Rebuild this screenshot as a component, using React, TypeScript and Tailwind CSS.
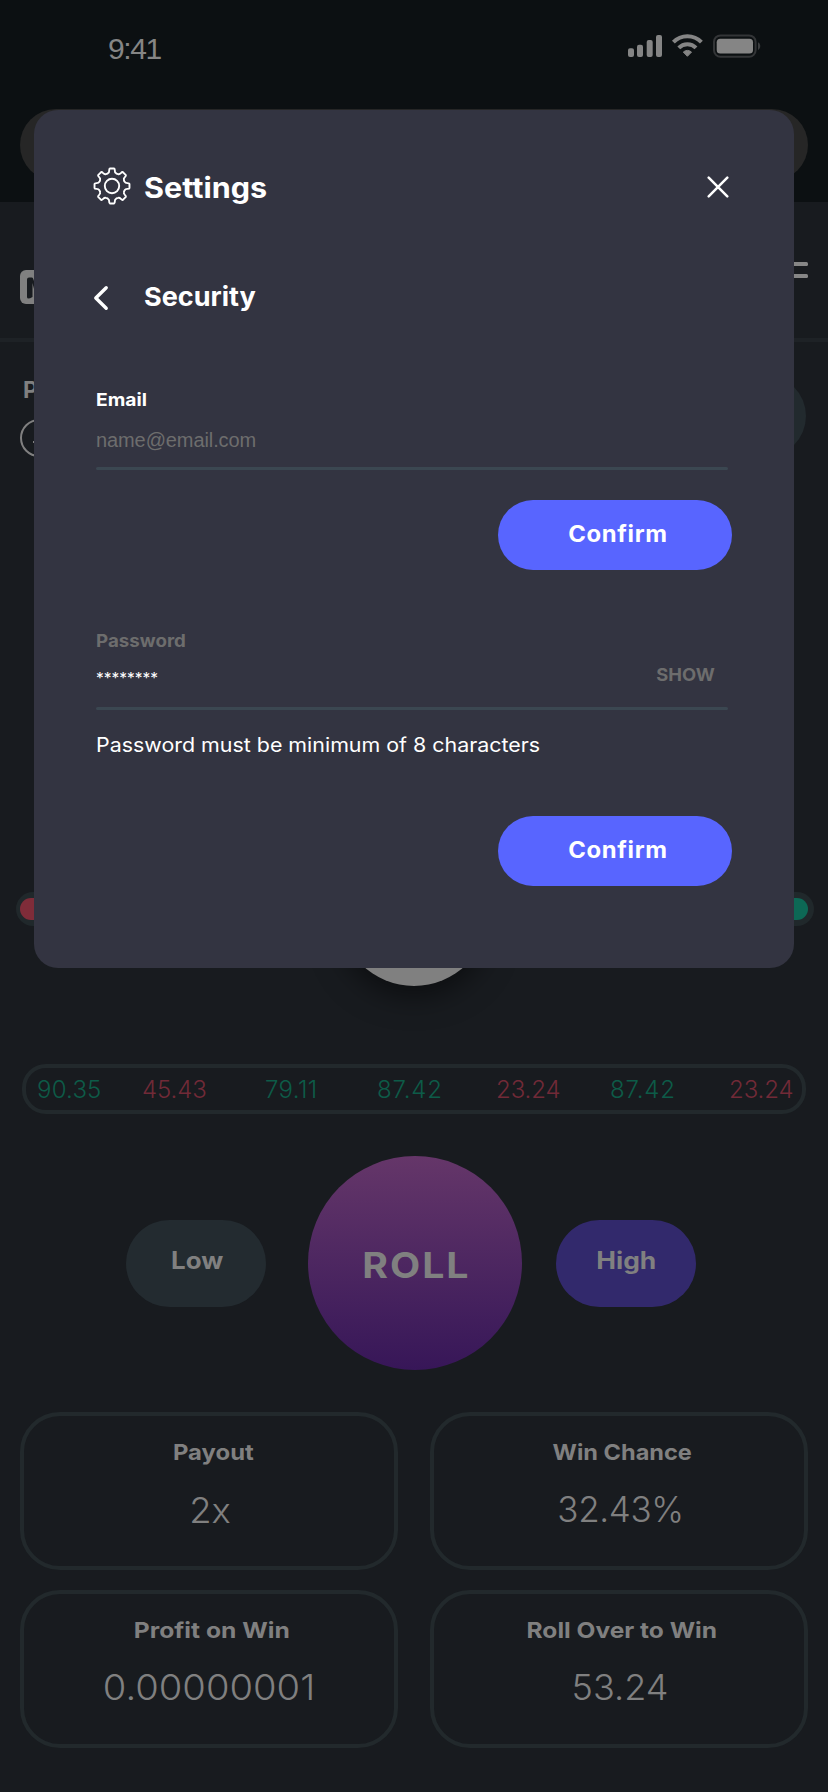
import React from 'react';

const results = [
  { v: '90.35', c: 'text-[#0d5b48]', p: 'w-[105px] tracking-[0.2px]' },
  { v: '45.43', c: 'text-[#712a37]', p: 'w-[123px] tracking-[-0.1px]' },
  { v: '79.11', c: 'text-[#0d5b48]', p: 'w-[112px] tracking-[0.4px]' },
  { v: '87.42', c: 'text-[#0d5b48]', p: 'w-[119px] tracking-[0.8px]' },
  { v: '23.24', c: 'text-[#712a37]', p: 'w-[114px] tracking-[-0.1px]' },
  { v: '87.42', c: 'text-[#0d5b48]', p: 'w-[119px] tracking-[0.8px]' },
  { v: '23.24', c: 'text-[#712a37]', p: 'w-[66px] tracking-[-0.1px]' },
];

const stats = [
  { label: 'Payout', value: '2x', lc: 'pl-[8px] scale-x-[1.085]', vc: 'mt-[35px] pl-[2px] scale-x-[1.04]' },
  { label: 'Win Chance', value: '32.43%', lc: 'pl-[6px] scale-x-[1.07]', vc: 'mt-[34px] pl-[3px] tracking-[-0.36px]' },
  { label: 'Profit on Win', value: '0.00000001', lc: 'pl-[5px] scale-x-[1.12]', vc: 'mt-[34px] scale-x-[1.09]' },
  { label: 'Roll Over to Win', value: '53.24', lc: 'pl-[5px] scale-x-[1.115]', vc: 'mt-[34px] pl-[2px] scale-x-[1.03]' },
];

function gearPath() {
  const at = (r: number, deg: number) => {
    const a = ((deg - 90) * Math.PI) / 180;
    return `${(19 + r * Math.cos(a)).toFixed(2)} ${(19 + r * Math.sin(a)).toFixed(2)}`;
  };
  let d = '';
  for (let i = 0; i < 8; i++) {
    const b = i * 45;
    d += `${i === 0 ? 'M' : 'L'}${at(15.6, b - 10.5)} Q${at(17.6, b - 9.5)} ${at(17.6, b - 7)} L${at(17.6, b + 7)} Q${at(17.6, b + 9.5)} ${at(15.6, b + 10.5)} Q${at(13.6, b + 12)} ${at(13.4, b + 17.5)} Q${at(13, b + 22.5)} ${at(13.4, b + 27.5)} Q${at(13.6, b + 33)} ${at(15.6, b + 34.5)} `;
  }
  return d + 'Z';
}

function StatusIcons() {
  return (
    <svg width="136" height="26" viewBox="0 0 136 26" fill="#858585">
      <rect x="1" y="15.3" width="6" height="8.7" rx="2" />
      <rect x="10" y="11.7" width="6" height="12.3" rx="2" />
      <rect x="19.7" y="7" width="6" height="17" rx="2" />
      <rect x="29" y="2" width="6" height="22" rx="2" />
      <g fill="none" stroke="#858585" strokeWidth="4">
        <path d="M46.4 9.2a19.5 19.5 0 0 1 28 0" />
        <path d="M51.8 14.9a12 12 0 0 1 17.2 0" />
      </g>
      <path d="M60.4 23.3l-4.1-4.2a5.8 5.8 0 0 1 8.2 0z" strokeLinejoin="round" stroke="#858585" strokeWidth="1" />
      <rect x="87" y="2.4" width="41.6" height="21.4" rx="6.5" fill="none" stroke="#333537" strokeWidth="2" />
      <rect x="89.7" y="5.7" width="36.3" height="14.8" rx="3.5" />
      <path d="M131 9.3v7.6c3-1.3 3-6.3 0-7.6z" fill="#3c3e40" />
    </svg>
  );
}

function ConfirmButton() {
  return (
    <button className="h-[70px] w-[234px] shrink-0 self-end rounded-full bg-[#5865ff] pb-[2px] pl-[5px] text-[22.5px] font-bold leading-[68px] text-white">
      <span className="inline-block scale-x-[1.06] tracking-[0.6px]">Confirm</span>
    </button>
  );
}

function SettingsModal() {
  return (
    <section className="absolute left-[34px] top-[110px] flex h-[858px] w-[760px] flex-col rounded-[24px] bg-[#333441] px-[62px] pt-[57px] text-white">
      <header className="-ml-[3px] flex h-10 items-center">
        <svg className="-mt-[2px]" width="38" height="38" viewBox="0 0 38 38" fill="none" stroke="white" strokeWidth="1.9" strokeLinejoin="round">
          <path d={gearPath()} />
          <circle cx="19" cy="19" r="7.2" />
        </svg>
        <h1 className="ml-[13px] mt-[2px] origin-left scale-x-[1.09] text-[28px] font-bold leading-10">Settings</h1>
        <button className="-mt-px ml-auto mr-[3px]">
          <svg width="22" height="22" viewBox="0 0 22 22" stroke="white" strokeWidth="2.5" strokeLinecap="round">
            <path d="M1.7 1.7l18.6 18.6M20.3 1.7L1.7 20.3" />
          </svg>
        </button>
      </header>
      <div className="-ml-[3px] mt-[70px] flex h-10 items-center">
        <svg className="mt-[2px]" width="17" height="26" viewBox="0 0 17 26" fill="none" stroke="white" strokeWidth="3.4" strokeLinecap="round" strokeLinejoin="round">
          <path d="M13.2 2.7L2.8 13l10.4 10.3" />
        </svg>
        <h2 className="ml-[34px] origin-left scale-x-[1.04] text-[26px] font-bold leading-10">Security</h2>
      </div>
      <label className="mt-[73px] origin-left scale-x-[1.1] self-start text-[17.5px] font-bold leading-5">Email</label>
      <p className="mt-[18px] font-['Liberation_Sans',Arial,sans-serif] text-[20px] leading-6 tracking-[-0.1px] text-[#6d6d6d]">name@email.com</p>
      <div className="mt-[15px] h-[3px] w-[632px] shrink-0 rounded-full bg-[#3b4751]" />
      <div className="h-[30px]" />
      <ConfirmButton />
      <label className="mt-[61px] origin-left scale-x-[1.07] self-start text-[17.5px] font-bold leading-5 text-[#6d6d6d]">Password</label>
      <div className="mt-3 flex h-6 items-center justify-between pr-[17px]">
        <span className="pt-[8px] text-[15.5px] leading-6">********</span>
        <span className="origin-right scale-x-[1.05] text-[17.5px] font-bold leading-6 text-[#6d6d6d]">SHOW</span>
      </div>
      <div className="mt-5 h-[3px] w-[632px] shrink-0 rounded-full bg-[#3b4751]" />
      <p className="mt-[23px] origin-left scale-x-[1.07] self-start whitespace-nowrap text-[20px] leading-6">Password must be minimum of 8 characters</p>
      <div className="h-[59px]" />
      <ConfirmButton />
    </section>
  );
}

export default function App() {
  return (
    <main className="relative flex h-[1792px] w-[828px] flex-col overflow-hidden bg-[#181b1f] font-[Inter,sans-serif] text-[#808080]">
      <div className="h-[202px] shrink-0 bg-[#0c1012]">
        <div className="flex h-[109px] justify-between pl-[108px] pr-[65px] pt-[33px]">
          <time className="font-['Liberation_Sans',Arial,sans-serif] text-[30px] leading-[32px] tracking-[-1.4px] text-[#858585]">9:41</time>
          <StatusIcons />
        </div>
        <div className="mx-5 h-[72px] rounded-full bg-[#262626]" />
      </div>
      <header className="flex h-[140px] shrink-0 justify-between border-b-4 border-[#1e2226] px-5">
        <svg className="mt-[68px]" width="34" height="34" viewBox="0 0 34 34">
          <rect width="34" height="34" rx="6" fill="#808080" />
          <path d="M7 27V9.500Q7 7.500 9 7.500H12Q13 7.500 13.300 9L17 20L20.700 9Q21 7.500 22 7.500H24.500Q26 7.500 26 9.500V27H21V16L18 27H16L12.500 13V27Q7 30 7 27Z" fill="#181b1f" />
        </svg>
        <svg className="mt-[60px]" width="34" height="16" fill="#868686">
          <rect width="34" height="4" rx="1.500" />
          <rect y="12" width="34" height="4" rx="1.500" />
        </svg>
      </header>
      <div className="flex h-[550px] shrink-0 justify-between pl-5 pr-[22px] pt-[33px]">
        <div>
          <p className="pl-[3px] pt-[3px] text-[23px] font-bold leading-[24px]">P</p>
          <div className="mt-[17px] size-[38px] rounded-full border-2 border-[#808080]">
            <div className="ml-[11px] mt-[20px] h-[2px] w-3 bg-[#808080]" />
          </div>
        </div>
        <div className="h-[82px] w-[180px] rounded-full bg-[#222a2e]" />
      </div>
      <div className="relative ml-4 h-[34px] w-[798px] shrink-0 rounded-full bg-[#20282b] py-[6px] pl-[4px] pr-[6px]">
        <div className="flex h-[22px] overflow-hidden rounded-full">
          <div className="flex-1 bg-[#7f2c39]" />
          <div className="flex-1 bg-[#0d6855]" />
        </div>
        <div className="absolute left-[323px] top-[-56px] size-[150px] rounded-full bg-[#808080] shadow-[0_10px_30px_rgba(0,0,0,0.5)]" />
      </div>
      <div className="ml-[22px] mt-[138px] flex h-[50px] w-[784px] shrink-0 rounded-[24px] border-4 border-[#22292c] pl-[11px] text-[24px] font-light leading-[44px]">
        {results.map((r, i) => (
          <span key={i} className={`shrink-0 ${r.p} ${r.c}`}>{r.v}</span>
        ))}
      </div>
      <div className="mt-[42px] flex h-[214px] shrink-0 items-center pl-[126px]">
        <button className="h-[87px] w-[140px] rounded-full bg-[#232b30] pb-[4px] pl-[2px] text-[24px] font-bold"><span className="inline-block scale-x-[1.08]">Low</span></button>
        <button className="ml-[42px] size-[214px] rounded-full bg-linear-to-b from-[#653669] to-[#371658] pl-[2px] pt-[4px] text-[35px] font-bold"><span className="inline-block scale-x-[1.12] tracking-[1.8px]">ROLL</span></button>
        <button className="ml-[34px] h-[87px] w-[140px] rounded-full bg-[#32296c] pb-[4px] text-[24px] font-bold"><span className="inline-block scale-x-[1.1]">High</span></button>
      </div>
      <div className="mt-[42px] grid grid-cols-2 gap-x-8 gap-y-5 px-5">
        {stats.map((s) => (
          <div key={s.label} className="h-[158px] rounded-[40px] border-4 border-[#22292c] pt-[24px] text-center">
            <p className={`text-[22px] font-bold leading-6 ${s.lc}`}>{s.label}</p>
            <p className={`text-[35px] font-light leading-[23px] ${s.vc}`}>{s.value}</p>
          </div>
        ))}
      </div>
      <SettingsModal />
    </main>
  );
}
